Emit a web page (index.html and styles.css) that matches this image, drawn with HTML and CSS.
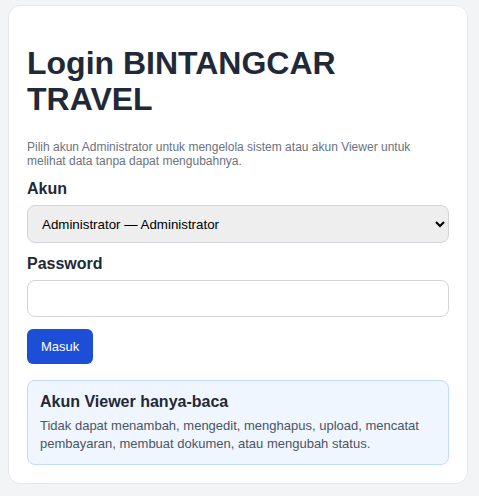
FILE: index.html
```
<!DOCTYPE html>
<html lang="id">

<head>
    <meta charset="UTF-8">
    <meta name="viewport" content="width=device-width, initial-scale=1.0">
    <title>Login BINTANGCAR TRAVEL</title>

    <link rel="stylesheet" href="styles.css">
</head>

<body>
    <main class="card">
        <h1 class="title">Login BINTANGCAR TRAVEL</h1>

        <p class="hint">
            Pilih akun Administrator untuk mengelola sistem atau akun Viewer untuk
            melihat data tanpa dapat mengubahnya.
        </p>

        <form>
            <label for="akun">Akun</label>
            <select id="akun" class="field field-select">
                <option>Administrator — Administrator</option>
                <option>Viewer — Viewer</option>
            </select>

            <label for="password">Password</label>
            <input id="password" class="field" type="password">

            <div class="action">
                <button type="button">Masuk</button>
            </div>
        </form>

        <div class="notice">
            <h3>Akun Viewer hanya-baca</h3>
            <p>
                Tidak dapat menambah, mengedit, menghapus, upload, mencatat
                pembayaran, membuat dokumen, atau mengubah status.
            </p>
        </div>
    </main>
</body>

</html>
```

FILE: styles.css
```
:root {
    --primary: #1d4ed8;
    --text: #1f2937;
    --muted: #6b7280;
    --border: #d1d5db;
    --background: #f3f4f6;
}

* {
    box-sizing: border-box;
}

body {
    margin: 0;
    padding: 5px 8px;
    background-color: var(--background);
    font-family: "Liberation Sans", Arial, sans-serif;
    color: var(--text);
}

.card {
    max-width: 460px;
    background-color: white;
    border: 1px solid #e5e7eb;
    border-radius: 12px;
    padding: 18px;
}

.title {
    font-size: 32px;
    line-height: 36px;
    margin: 21px 0 23px;
}

.hint {
    font-size: 12px;
    line-height: 14px;
    color: var(--muted);
    margin: 12px 0;
}

label {
    display: block;
    font-size: 16px;
    font-weight: bold;
    margin: 12px 0 7px;
}

.field {
    display: block;
    width: 100%;
    height: 37px;
    border: 1px solid var(--border);
    border-radius: 8px;
    background-color: white;
    font-family: inherit;
    font-size: 13.33px;
    padding: 8px 10px;
    margin-bottom: 12px;
}

.field-select {
    height: 38px;
    background-color: #eeeeee;
    color: black;
}

.action {
    display: flex;
}

button {
    background-color: var(--primary);
    color: white;
    border: none;
    border-radius: 6px;
    font-family: inherit;
    font-size: 13px;
    padding: 10px 14px;
    height: 35px;
    cursor: pointer;
}

.notice {
    margin-top: 16px;
    background-color: #eff6ff;
    border: 1px solid #bfdbfe;
    border-radius: 8px;
    padding: 12px;
}

.notice h3 {
    font-size: 16px;
    margin: 0 0 6px;
}

.notice p {
    font-size: 13px;
    line-height: 17.5px;
    color: #4b5563;
    margin: 0;
}
```
